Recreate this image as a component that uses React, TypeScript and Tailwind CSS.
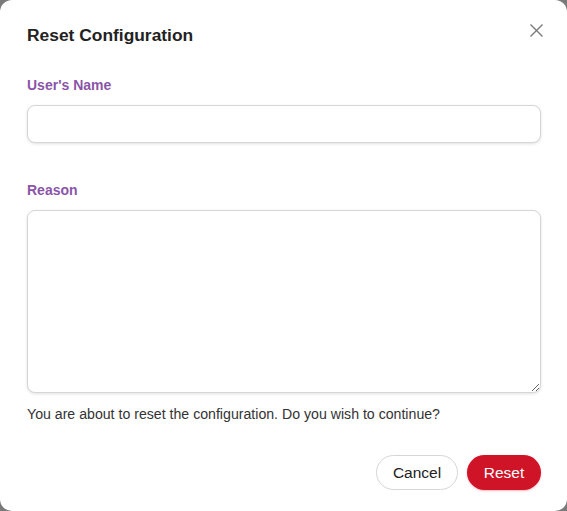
import React from "react";

export default function App() {
  return (
    <div className="w-[567px] h-[511px] bg-[#7a7a7a] overflow-hidden" style={{ fontFamily: '"Liberation Sans", Arial, sans-serif' }}>
      <div className="relative w-[567px] h-[511px] bg-white rounded-[12px] pl-[27px] pr-[26px] pt-[21px] flex flex-col">
        <h2 className="text-[17.4px] leading-[28px] font-bold text-[#222]">Reset Configuration</h2>
        <button className="absolute right-[23px] top-[23px] w-[15px] h-[15px] flex items-center justify-center text-[#7a7a7a]">
          <svg width="15" height="15" viewBox="0 0 15 15" fill="none" stroke="currentColor" strokeWidth="1.4">
            <path d="M1.5 1.5 L13.5 13.5 M13.5 1.5 L1.5 13.5" />
          </svg>
        </button>
        <label className="mt-[26px] text-[14px] leading-[20px] font-bold text-[#8a55a8]">User's Name</label>
        <input className="mt-[10px] h-[38px] w-full rounded-[8px] border border-[#d6d6d6] shadow-[0_1px_3px_rgba(0,0,0,0.12)] bg-white outline-none px-3 text-[14px]" />
        <label className="mt-[37px] text-[14px] leading-[20px] font-bold text-[#8a55a8]">Reason</label>
        <textarea className="mt-[10px] h-[183px] w-full rounded-[8px] border border-[#d6d6d6] shadow-[0_1px_3px_rgba(0,0,0,0.12)] bg-white outline-none px-3 py-2 text-[14px] resize-y" />
        <p className="mt-[11px] text-[14.15px] leading-[20px] text-[#333]">You are about to reset the configuration. Do you wish to continue?</p>
        <div className="mt-[31px] flex justify-end gap-[9px]">
          <button className="h-[35px] w-[82px] rounded-full border border-[#d6d6d6] bg-white text-[15.5px] text-[#222]">Cancel</button>
          <button className="h-[35px] w-[74px] rounded-full bg-[#d01427] text-[15.5px] text-white shadow-[0_1px_2px_rgba(208,20,39,0.3)]">Reset</button>
        </div>
      </div>
    </div>
  );
}
